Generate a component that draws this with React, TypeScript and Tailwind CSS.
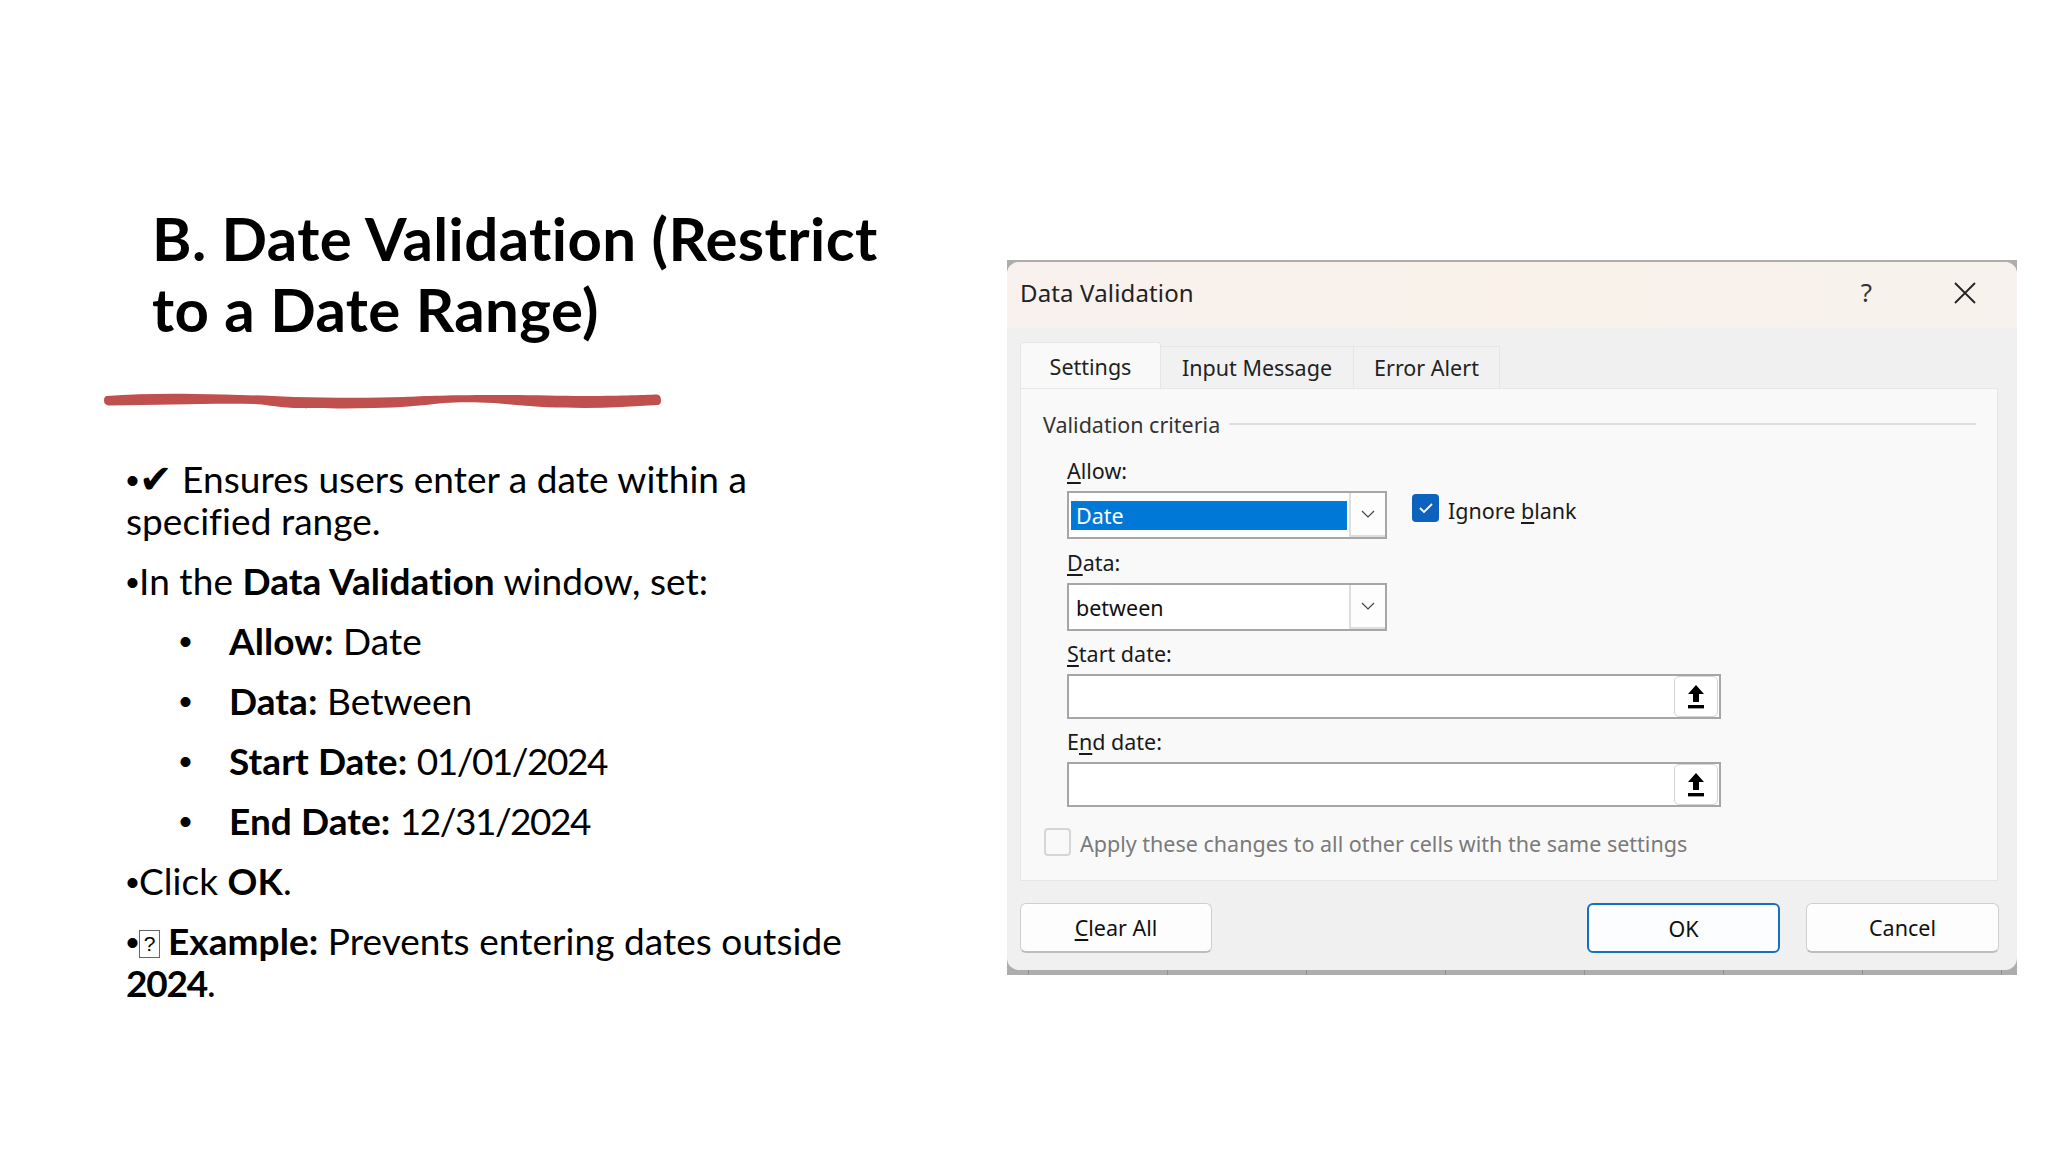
const lato = "font-['Lato','Carlito',sans-serif]";

function Bullet() {
  return <span className="font-['Liberation_Sans',sans-serif] leading-[0]">•</span>;
}

function Tofu() {
  return (
    <span className="mr-[8px] inline-block h-[28px] w-[21px] overflow-hidden border border-[#666] text-center align-[-3px] font-['Liberation_Sans',sans-serif] text-[21px] font-normal leading-[26px] text-black">
      ?
    </span>
  );
}

function SubItem({ label, value, digits }: { label: string; value: string; digits?: boolean }) {
  return (
    <div className="mt-[18px] flex h-[42px] items-center">
      <span className="w-[50px] font-['Liberation_Sans',sans-serif] leading-none">•</span>
      <p className="whitespace-nowrap">
        <b>{label}</b> <span className={digits ? "tracking-[-1.5px]" : ""}>{value}</span>
      </p>
    </div>
  );
}

function Chevron() {
  return (
    <svg width="14" height="8" viewBox="0 0 14 8" fill="none" stroke="#444" strokeWidth="1.2">
      <path d="M1 1l6 6 6-6" />
    </svg>
  );
}

function Combo({ text, selected }: { text: string; selected?: boolean }) {
  return (
    <div className="flex h-[48px] w-[320px] border-2 border-[#a6a6a6] bg-white">
      <div className="flex min-w-0 flex-1 items-center px-[2px]">
        {selected ? (
          <span className="flex h-[29px] w-[278px] items-center border border-dotted border-[#7a6a30] bg-[#0078d7] pl-[4px] pt-[2px] text-white">{text}</span>
        ) : (
          <span className="pl-[5px] pt-[2px] text-[#111]">{text}</span>
        )}
      </div>
      <div className="flex w-[36px] items-center justify-center border-l-2 border-[#dedede] border-b-2 bg-[#fdfdfd]">
        <Chevron />
      </div>
    </div>
  );
}

function UploadIcon() {
  return (
    <svg width="18" height="24" viewBox="0 0 18 24" fill="#000">
      <path d="M9 0L17 9H12V17H6V9H1Z" />
      <rect x="1" y="20" width="16" height="3.4" />
    </svg>
  );
}

function RefInput() {
  return (
    <div className="flex h-[45px] w-[654px] justify-end border-2 border-[#a6a6a6] bg-white pr-[1px]">
      <div className="flex w-[44px] items-center justify-center rounded-[5px] border border-[#d4d4d4] bg-white">
        <UploadIcon />
      </div>
    </div>
  );
}

function Label({ pre, u, post, cls }: { pre?: string; u: string; post: string; cls: string }) {
  return (
    <div className={`h-[28px] leading-[28px] text-[#1a1a1a] ${cls}`}>
      {pre}
      <span className="underline underline-offset-[3px]">{u}</span>
      {post}
    </div>
  );
}

function Btn({ children, primary, cls }: { children: React.ReactNode; primary?: boolean; cls: string }) {
  return (
    <div
      className={`flex h-[50px] items-center justify-center rounded-[6px] pt-[2px] text-[#111] ${cls} ${
        primary ? "border-2 border-[#1272c0] bg-[#fbfdfe]" : "border border-[#cfcfcf] border-b-2 border-b-[#bdbdbd] bg-[#fdfdfd]"
      }`}
    >
      {children}
    </div>
  );
}

const ticks = [1, 2, 3, 4, 5, 6, 7, 8];

function Dialog() {
  return (
    <div className="relative w-[1010px] bg-[#adadad] pt-[2px] font-['Noto_Sans',sans-serif] text-[21.5px]">
      <div className="h-[708px] overflow-hidden rounded-[12px] bg-[#f0f0f0]">
        <div className="flex h-[66px] items-center justify-between bg-gradient-to-r from-[#f8f1ee] via-[#f9f1ea] to-[#f7f2ed] pb-[5px] pl-[13px]">
          <span className="text-[24px] tracking-[0.15px] text-[#222]">Data Validation</span>
          <div className="flex items-center">
            <span className="mr-[82px] text-[26px] text-[#333]">?</span>
            <svg className="mr-[41px]" width="22" height="22" viewBox="0 0 22 22" stroke="#222" strokeWidth="1.8" fill="none">
              <path d="M1 1l20 20M21 1L1 21" />
            </svg>
          </div>
        </div>

        <div className="flex h-[60px] items-end pl-[13px]">
          <div className="flex h-[46px] w-[141px] items-center justify-center rounded-t-[3px] border border-b-0 border-[#e6e6e6] bg-[#f9f9f9] pt-[4px] text-[#222]">Settings</div>
          <div className="flex h-[42px] w-[193px] items-center justify-center border-t border-r border-[#e6e6e6] bg-[#f1f1f1] pt-[2px] text-[#222]">Input Message</div>
          <div className="flex h-[42px] w-[146px] items-center justify-center border-t border-r border-[#e6e6e6] bg-[#f1f1f1] pt-[2px] text-[#222]">Error Alert</div>
        </div>

        <div className="ml-[13px] h-[493px] w-[978px] border border-[#e6e6e6] bg-[#f9f9f9]">
          <div className="mt-[24px] flex h-[24px] items-center pl-[22px] pr-[21px]">
            <span className="text-[#333]">Validation criteria</span>
            <span className="ml-[9px] h-[2px] flex-1 -translate-y-[1px] bg-[#dedede]" />
          </div>

          <div className="pl-[46px]">
            <Label u="A" post="llow:" cls="mt-[20px]" />
            <div className="mt-[6px] flex items-start">
              <Combo text="Date" selected />
              <span className="ml-[25px] mt-[3px] flex h-[28px] w-[27px] items-center justify-center rounded-[4px] bg-[#0c62bd]">
                <svg width="16" height="12" viewBox="0 0 16 12" fill="none" stroke="#fff" strokeWidth="1.8">
                  <path d="M2 6l4 4 8-8" />
                </svg>
              </span>
              <span className="ml-[9px] mt-[6px] leading-[28px] text-[#1a1a1a]">
                Ignore <span className="underline underline-offset-[3px]">b</span>lank
              </span>
            </div>
            <Label u="D" post="ata:" cls="mt-[10px]" />
            <div className="mt-[6px]">
              <Combo text="between" />
            </div>
            <Label u="S" post="tart date:" cls="mt-[9px]" />
            <div className="mt-[6px]">
              <RefInput />
            </div>
            <Label pre="E" u="n" post="d date:" cls="mt-[9px]" />
            <div className="mt-[6px]">
              <RefInput />
            </div>
          </div>

          <div className="mt-[21px] flex items-center pl-[23px]">
            <span className="mb-[5px] h-[28px] w-[27px] rounded-[4px] border-2 border-[#d6d6d6] bg-[#f9f9f9]" />
            <span className="ml-[9px] text-[#7a7a7a]">Apply these changes to all other cells with the same settings</span>
          </div>
        </div>

        <div className="flex pl-[13px] pt-[22px]">
          <Btn cls="w-[192px]">
            <span>
              <span className="underline underline-offset-[3px]">C</span>lear All
            </span>
          </Btn>
          <Btn primary cls="ml-[375px] w-[193px]">OK</Btn>
          <Btn cls="ml-[26px] w-[193px]">Cancel</Btn>
        </div>
      </div>
      <div className="flex h-[5px] justify-between pl-[21px] pr-[15px]">
        {ticks.map((t) => (
          <span key={t} className="h-[5px] w-[1px] bg-[#8f8f8f]" />
        ))}
      </div>
    </div>
  );
}

export default function App() {
  return (
    <div className={`flex h-[1152px] w-[2048px] overflow-hidden bg-white text-black ${lato}`}>
      <div className="w-[1007px] pl-[126px]">
        <h1 className="mt-[203px] pl-[26px] text-[60px] font-bold leading-[71px] tracking-[0.4px]">
          B. Date Validation (Restrict
          <br />
          to a Date Range)
        </h1>
        <svg className="-ml-[22px] mt-[48px] block" width="557" height="16" viewBox="0 0 557 16">
          <path d="M3 3C30 1 60 0.5 90 1C120 1.5 150 2 190 4C230 5 270 5 300 4C320 3 345 2 400 2C430 2 455 3 480 3C510 3 540 2 553 1.5C556 2 557 4 557 8C557 10 556 12 553 12C530 13 505 15 480 15C450 15 430 14 390 10C370 9 355 9 340 10C320 12 295 15 270 15C240 16 210 15 190 15C170 14 160 11 150 11C110 10 60 12 5 12.5C1 12 0 10 0 7C0 5 1 3 3 3Z" fill="#c0504d" />
        </svg>
        <div className="mt-[49px] w-[760px] text-[37px] leading-[42px] tracking-[0.05px]">
          <p>
            <Bullet />
            <span className="font-['DejaVu_Sans',sans-serif] text-[40px] font-bold leading-[0]">✔</span> Ensures users enter a date within a
            <br />
            specified range.
          </p>
          <p className="mt-[18px]">
            <Bullet />
            In the <b>Data Validation</b> window, set:
          </p>
          <div className="ml-[53px]">
            <SubItem label="Allow:" value="Date" />
            <SubItem label="Data:" value="Between" />
            <SubItem label="Start Date:" value="01/01/2024" digits />
            <SubItem label="End Date:" value="12/31/2024" digits />
          </div>
          <p className="mt-[18px]">
            <Bullet />
            Click <b>OK</b>.
          </p>
          <p className="mt-[18px]">
            <Bullet />
            <Tofu />
            <b>Example:</b> Prevents entering dates outside
            <br />
            <b className="tracking-[-1.2px]">2024</b>.
          </p>
        </div>
      </div>
      <div className="pt-[260px]">
        <Dialog />
      </div>
    </div>
  );
}
